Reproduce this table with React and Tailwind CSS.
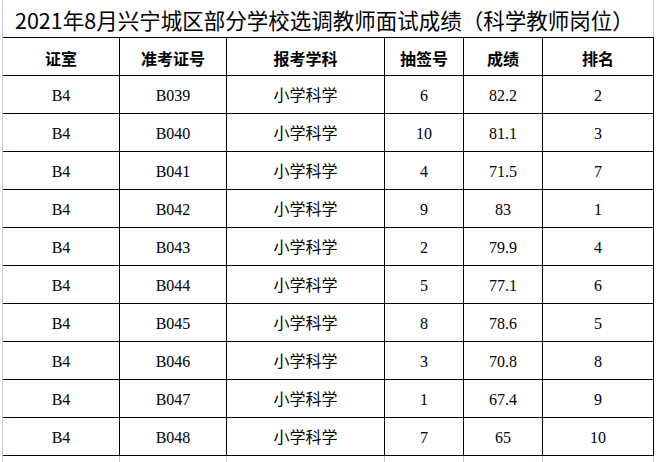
const COLUMNS = [
  { label: '证室', width: 'w-[117px]' },
  { label: '准考证号', width: 'w-[107px]' },
  { label: '报考学科', width: 'w-[158px]' },
  { label: '抽签号', width: 'w-[79px]' },
  { label: '成绩', width: 'w-[79px]' },
  { label: '排名', width: 'w-[111px]' },
]

const ROWS = [
  ['B4', 'B039', '小学科学', '6', '82.2', '2'],
  ['B4', 'B040', '小学科学', '10', '81.1', '3'],
  ['B4', 'B041', '小学科学', '4', '71.5', '7'],
  ['B4', 'B042', '小学科学', '9', '83', '1'],
  ['B4', 'B043', '小学科学', '2', '79.9', '4'],
  ['B4', 'B044', '小学科学', '5', '77.1', '6'],
  ['B4', 'B045', '小学科学', '8', '78.6', '5'],
  ['B4', 'B046', '小学科学', '3', '70.8', '8'],
  ['B4', 'B047', '小学科学', '1', '67.4', '9'],
  ['B4', 'B048', '小学科学', '7', '65', '10'],
]

const cjkSans = 'font-["Noto_Sans_CJK_SC",sans-serif]'

export default function App() {
  return (
    <div className="h-[462px] w-[657px] overflow-hidden bg-white text-black">
      <div className="ml-[2px] h-full border-l border-[#c3cbd9]">
        {/* title row */}
        <div
          className={`flex h-[37px] w-[651px] items-center border-r border-[#c3cbd9] pl-[12px] pt-[3px] text-[21.5px] leading-none ${cjkSans}`}
        >
          2021年8月兴宁城区部分学校选调教师面试成绩（科学教师岗位）
        </div>

        <div className="w-[651px] border-t border-black">
          <div className={`flex h-[38px] border-b border-black ${cjkSans}`}>
            {COLUMNS.map((col) => (
              <div
                key={col.label}
                className={`${col.width} flex shrink-0 items-center justify-center border-r border-black pt-[2px] text-[16px] font-bold leading-none`}
              >
                {col.label}
              </div>
            ))}
          </div>

          {ROWS.map((row) => (
            <div
              key={row[1]}
              className='flex h-[38px] border-b border-black font-["Liberation_Serif","Noto_Sans_CJK_SC",serif]'
            >
              {row.map((cell, i) => (
                <div
                  key={i}
                  className={`${COLUMNS[i].width} flex shrink-0 items-center justify-center border-r border-black pt-[2px] text-[16px] leading-none`}
                >
                  {cell}
                </div>
              ))}
            </div>
          ))}
        </div>

        {/* sheet gridline stubs under the table */}
        <div className="flex h-[10px] w-[651px]">
          {COLUMNS.map((col) => (
            <div key={col.label} className={`${col.width} shrink-0 border-r border-[#c3cbd9]`} />
          ))}
        </div>
      </div>
    </div>
  )
}
